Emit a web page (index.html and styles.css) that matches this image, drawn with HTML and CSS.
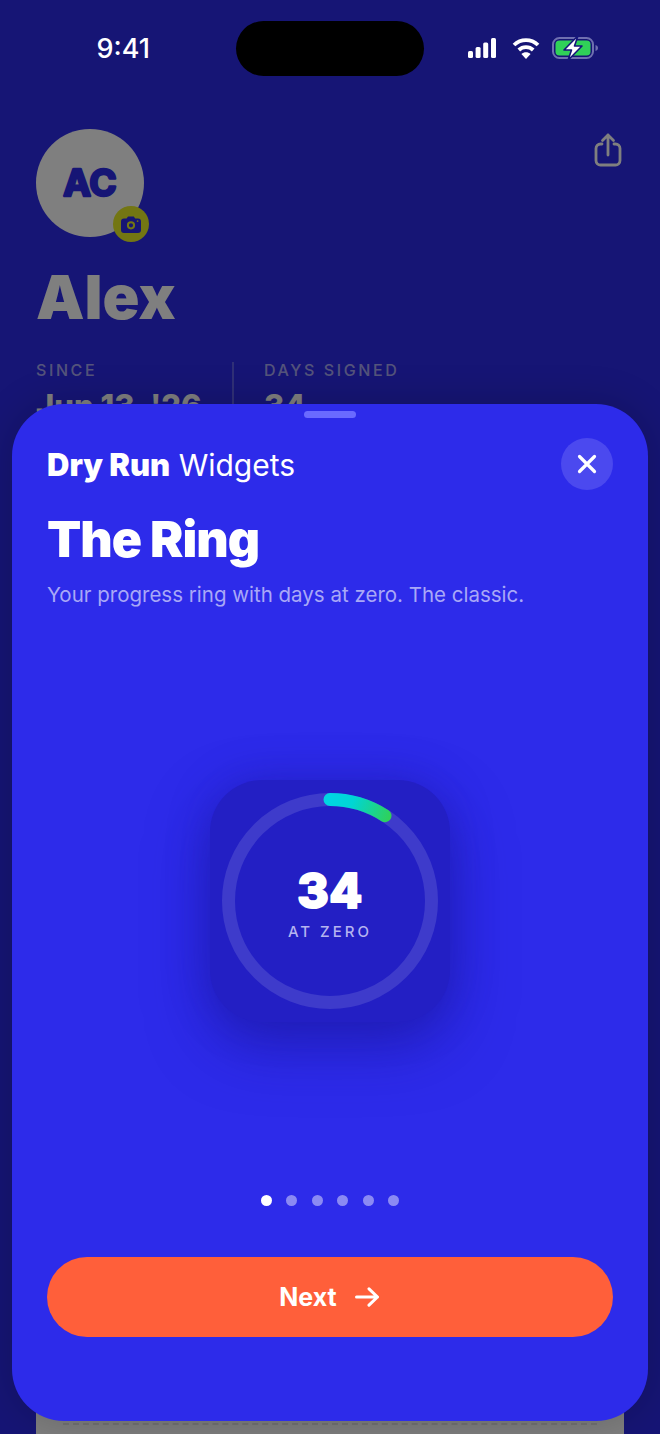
FILE: index.html
```html
<!DOCTYPE html>
<html lang="en">
<head>
    <meta charset="UTF-8">
    <meta name="viewport" content="width=device-width, initial-scale=1.0">
    <title>Dry Run Widgets</title>
    <link rel="stylesheet" href="styles.css">
</head>
<body>
    <div class="app">
        <main class="profile">
            <div class="profile-top">
                <div class="avatar">
                    <svg class="avatar-initials" width="70" height="44" viewBox="0 0 70 44">
                        <text x="35" y="35" text-anchor="middle">AC</text>
                    </svg>
                    <span class="avatar-badge">
                        <svg width="20" height="17" viewBox="0 0 20 17">
                            <path fill="#2d2bea" fill-rule="evenodd" d="M3 2.500h2.600L7 .6h5.800l1.400 1.900H17a3 3 0 0 1 3 3V14a3 3 0 0 1-3 3H3a3 3 0 0 1-3-3V5.500a3 3 0 0 1 3-3zM10 13.400a4.100 4.100 0 1 0 0-8.200 4.100 4.100 0 0 0 0 8.200zM10 11.400a2.100 2.100 0 1 1 0-4.200 2.100 2.100 0 0 1 0 4.200zM16.600 6a.9.9 0 1 0 0-1.800.9.9 0 0 0 0 1.800z"/>
                        </svg>
                    </span>
                </div>
                <button class="share-btn" aria-label="Share">
                    <svg width="28" height="34" viewBox="0 0 28 34" fill="none" stroke="#fff" stroke-width="2.800" stroke-linecap="round" stroke-linejoin="round">
                        <path d="M8 11H6.500A4.500 4.500 0 0 0 2 15.500v12A4.500 4.500 0 0 0 6.500 32h15a4.500 4.500 0 0 0 4.500-4.500v-12a4.500 4.500 0 0 0-4.500-4.500H20"/>
                        <path d="M14 22V2M8.500 7.500 14 2l5.500 5.500"/>
                    </svg>
                </button>
            </div>
            <h1 class="profile-name">Alex</h1>
            <div class="stats">
                <div class="stat stat-since">
                    <div class="stat-label">SINCE</div>
                    <div class="stat-value">Jun 13, '26</div>
                </div>
                <div class="stat stat-days">
                    <div class="stat-label">DAYS SIGNED</div>
                    <div class="stat-value">34</div>
                </div>
            </div>
            <div class="next-card">
                <div class="next-card-rule"></div>
            </div>
        </main>

        <div class="scrim"></div>

        <header class="status-bar">
            <span class="status-time">9:41</span>
            <span class="status-island"></span>
            <span class="status-icons">
                <svg width="28" height="20" viewBox="0 0 28 20" fill="#fff">
                    <rect x="0" y="13" width="5" height="7" rx="1.500"/>
                    <rect x="7.600" y="9" width="5" height="11" rx="1.500"/>
                    <rect x="15.200" y="4.500" width="5" height="15.500" rx="1.500"/>
                    <rect x="23" y="0" width="5" height="20" rx="1.500"/>
                </svg>
                <svg width="28" height="22" viewBox="0 0 28 22" fill="none" stroke="#fff" stroke-width="3.800">
                    <path d="M2 8C8.800 1.400 19.200 1.400 26 8"/>
                    <path d="M6.800 13c4-3.800 10.400-3.800 14.400 0"/>
                    <path d="M14 22l-4.600-5c2.600-2.200 6.600-2.200 9.200 0z" fill="#fff" stroke="none"/>
                </svg>
                <svg width="46" height="26" viewBox="0 0 46 26">
                    <rect x="1" y="3" width="40" height="20" rx="6.500" fill="none" stroke="#6f6fb0" stroke-width="2"/>
                    <rect x="3.500" y="5.500" width="35" height="15" rx="4" fill="#30d158"/>
                    <path d="M43.500 10c1.500.4 2.500 1.500 2.500 3s-1 2.600-2.500 3z" fill="#6f6fb0"/>
                    <path d="M26 .8 12 15h7.500L16 25.200 30 11h-7.500z" fill="#fff" stroke="#16157a" stroke-width="1.600" stroke-linejoin="round"/>
                </svg>
            </span>
        </header>

        <section class="sheet">
            <div class="sheet-handle"></div>
            <div class="sheet-head">
                <div class="sheet-brand"><b>Dry Run</b> Widgets</div>
                <button class="close-btn" aria-label="Close">
                    <svg width="20" height="20" viewBox="0 0 20 20" fill="none" stroke="#fff" stroke-width="3.200" stroke-linecap="round">
                        <path d="M2.500 2.500l15 15M17.500 2.500l-15 15"/>
                    </svg>
                </button>
            </div>
            <h2 class="sheet-title">The Ring</h2>
            <p class="sheet-desc">Your progress ring with days at zero. The classic.</p>

            <div class="preview">
                <div class="widget">
                    <svg class="ring" width="216" height="216" viewBox="0 0 216 216" fill="none">
                        <defs>
                            <linearGradient id="ringGrad" x1="108" y1="6" x2="166" y2="30" gradientUnits="userSpaceOnUse">
                                <stop offset="0" stop-color="#00d5e2"/>
                                <stop offset="0.35" stop-color="#00d5d5"/>
                                <stop offset="1" stop-color="#30d158"/>
                            </linearGradient>
                        </defs>
                        <circle cx="108" cy="108" r="101.500" stroke="#3e3bcb" stroke-width="13"/>
                        <path d="M108 6.500A101.500 101.500 0 0 1 163 22.700" stroke="url(#ringGrad)" stroke-width="13" stroke-linecap="round"/>
                        <text class="widget-num" x="108" y="115" text-anchor="middle">34</text>
                    </svg>
                    <div class="widget-label">AT ZERO</div>
                </div>
            </div>

            <div class="dots">
                <span class="dot dot-on"></span>
                <span class="dot"></span>
                <span class="dot"></span>
                <span class="dot"></span>
                <span class="dot"></span>
                <span class="dot"></span>
            </div>

            <button class="next-btn">
                Next
                <svg width="24" height="20" viewBox="0 0 24 20" fill="none" stroke="#fff" stroke-width="3" stroke-linecap="round" stroke-linejoin="round">
                    <path d="M1.500 10h21M14 1.800l8.500 8.200-8.500 8.200"/>
                </svg>
            </button>
        </section>
    </div>
</body>
</html>
```

FILE: styles.css
```css
/* Base */
* {
    box-sizing: border-box;
}

body {
    margin: 0;
    font-family: 'Inter', 'Liberation Sans', sans-serif;
    background: #2d2bea;
}

button {
    border: none;
    padding: 0;
    background: none;
    font-family: inherit;
}

.app {
    position: relative;
    width: 660px;
    height: 1434px;
    overflow: hidden;
}

/* Profile page behind the sheet */
.profile {
    padding: 129px 36px 0;
    color: #fff;
}

.profile-top {
    display: flex;
    justify-content: space-between;
    align-items: flex-start;
}

.avatar {
    position: relative;
    display: flex;
    align-items: center;
    justify-content: center;
    width: 108px;
    height: 108px;
    border-radius: 50%;
    background: #fff;
}

.avatar-initials text {
    font-size: 37px;
    font-weight: 700;
    fill: #2d2bea;
    stroke: #2d2bea;
    stroke-width: 2.500px;
    stroke-linejoin: round;
}

.avatar-badge {
    position: absolute;
    right: -5px;
    bottom: -5px;
    display: flex;
    align-items: center;
    justify-content: center;
    width: 36px;
    height: 36px;
    border-radius: 50%;
    background: #e6ec26;
}

.share-btn {
    display: block;
    margin: 4px 2px 0 0;
}

.profile-name {
    margin: 24px 0 0;
    font-size: 61px;
    line-height: 73px;
    font-weight: 900;
}

.stats {
    display: flex;
    margin-top: 28px;
    height: 70px;
}

.stat-since {
    width: 198px;
    border-right: 2px solid rgba(255, 255, 255, 0.25);
}

.stat-days {
    padding-left: 30px;
}

.stat-label {
    margin-top: -2px;
    font-size: 16px;
    line-height: 20px;
    font-weight: 500;
    letter-spacing: 2.600px;
    color: rgba(255, 255, 255, 0.6);
}

.stat-value {
    margin-top: 9px;
    font-size: 31px;
    line-height: 34px;
    font-weight: 800;
}

.next-card {
    padding: 991px 27px 40px;
    background: #fff;
}

.next-card-rule {
    border-top: 2px dashed #e4e4e4;
}

.scrim {
    position: absolute;
    inset: 0;
    background: rgba(0, 0, 0, 0.5);
}

/* Status bar */
.status-bar {
    position: absolute;
    top: 21px;
    left: 0;
    right: 0;
    height: 55px;
    display: grid;
    grid-template-columns: 1fr 188px 1fr;
    align-items: center;
}

.status-time {
    padding-right: 86px;
    text-align: right;
    font-size: 27px;
    font-weight: 500;
    color: #fff;
}

.status-island {
    height: 55px;
    border-radius: 28px;
    background: #000;
}

.status-icons {
    display: flex;
    align-items: center;
    gap: 16px;
    padding-left: 44px;
    margin-top: -1px;
}

.status-icons svg:last-child {
    margin-left: -4px;
}

/* Sheet */
.sheet {
    position: absolute;
    top: 404px;
    left: 12px;
    width: 636px;
    height: 1017px;
    padding: 7px 35px 0;
    border-radius: 52px;
    background: #2d2bea;
    box-shadow: 0 0 40px rgba(0, 0, 0, 0.2);
    color: #fff;
}

.sheet-handle {
    width: 52px;
    height: 7px;
    margin: 0 auto;
    border-radius: 4px;
    background: #6a6aff;
}

.sheet-head {
    display: flex;
    justify-content: space-between;
    align-items: center;
    margin-top: 20px;
}

.sheet-brand {
    font-size: 30px;
    font-weight: 400;
}

.sheet-brand b {
    font-size: 31px;
    font-weight: 900;
}

.close-btn {
    display: flex;
    align-items: center;
    justify-content: center;
    width: 52px;
    height: 52px;
    border-radius: 50%;
    background: #4b49ef;
}

.sheet-title {
    margin: 14px 0 0;
    font-size: 50px;
    line-height: 70px;
    font-weight: 900;
    letter-spacing: -1px;
}

.sheet-desc {
    margin: 5px 0 0;
    font-size: 20.500px;
    line-height: 32px;
    color: #a9a8f7;
}

.preview {
    display: flex;
    justify-content: center;
    margin-top: 169px;
}

.widget {
    position: relative;
    display: flex;
    flex-direction: column;
    align-items: center;
    width: 240px;
    height: 242px;
    padding-top: 142px;
    border-radius: 52px;
    background: #231fc4;
    box-shadow: 0 24px 60px rgba(24, 20, 150, 0.55), 0 0 40px rgba(30, 26, 170, 0.35);
}

.ring {
    position: absolute;
    top: 13px;
    left: 12px;
}

.widget-num {
    font-size: 48px;
    font-weight: 800;
    letter-spacing: 0.5px;
    fill: #fff;
    stroke: #fff;
    stroke-width: 2px;
    stroke-linejoin: round;
}

.widget-label {
    font-size: 15px;
    line-height: 20px;
    font-weight: 500;
    letter-spacing: 3px;
    color: #b5b4f0;
}

.dots {
    display: flex;
    justify-content: center;
    gap: 14.600px;
    margin-top: 173px;
}

.dot {
    width: 11px;
    height: 11px;
    border-radius: 50%;
    background: rgba(255, 255, 255, 0.45);
}

.dot-on {
    background: #fff;
}

.next-btn {
    display: flex;
    align-items: center;
    justify-content: center;
    gap: 18px;
    width: 566px;
    height: 80px;
    margin-top: 51px;
    padding-right: 2px;
    border-radius: 40px;
    background: #ff5f3a;
    color: #fff;
    font-size: 25px;
    font-weight: 700;
}
```
